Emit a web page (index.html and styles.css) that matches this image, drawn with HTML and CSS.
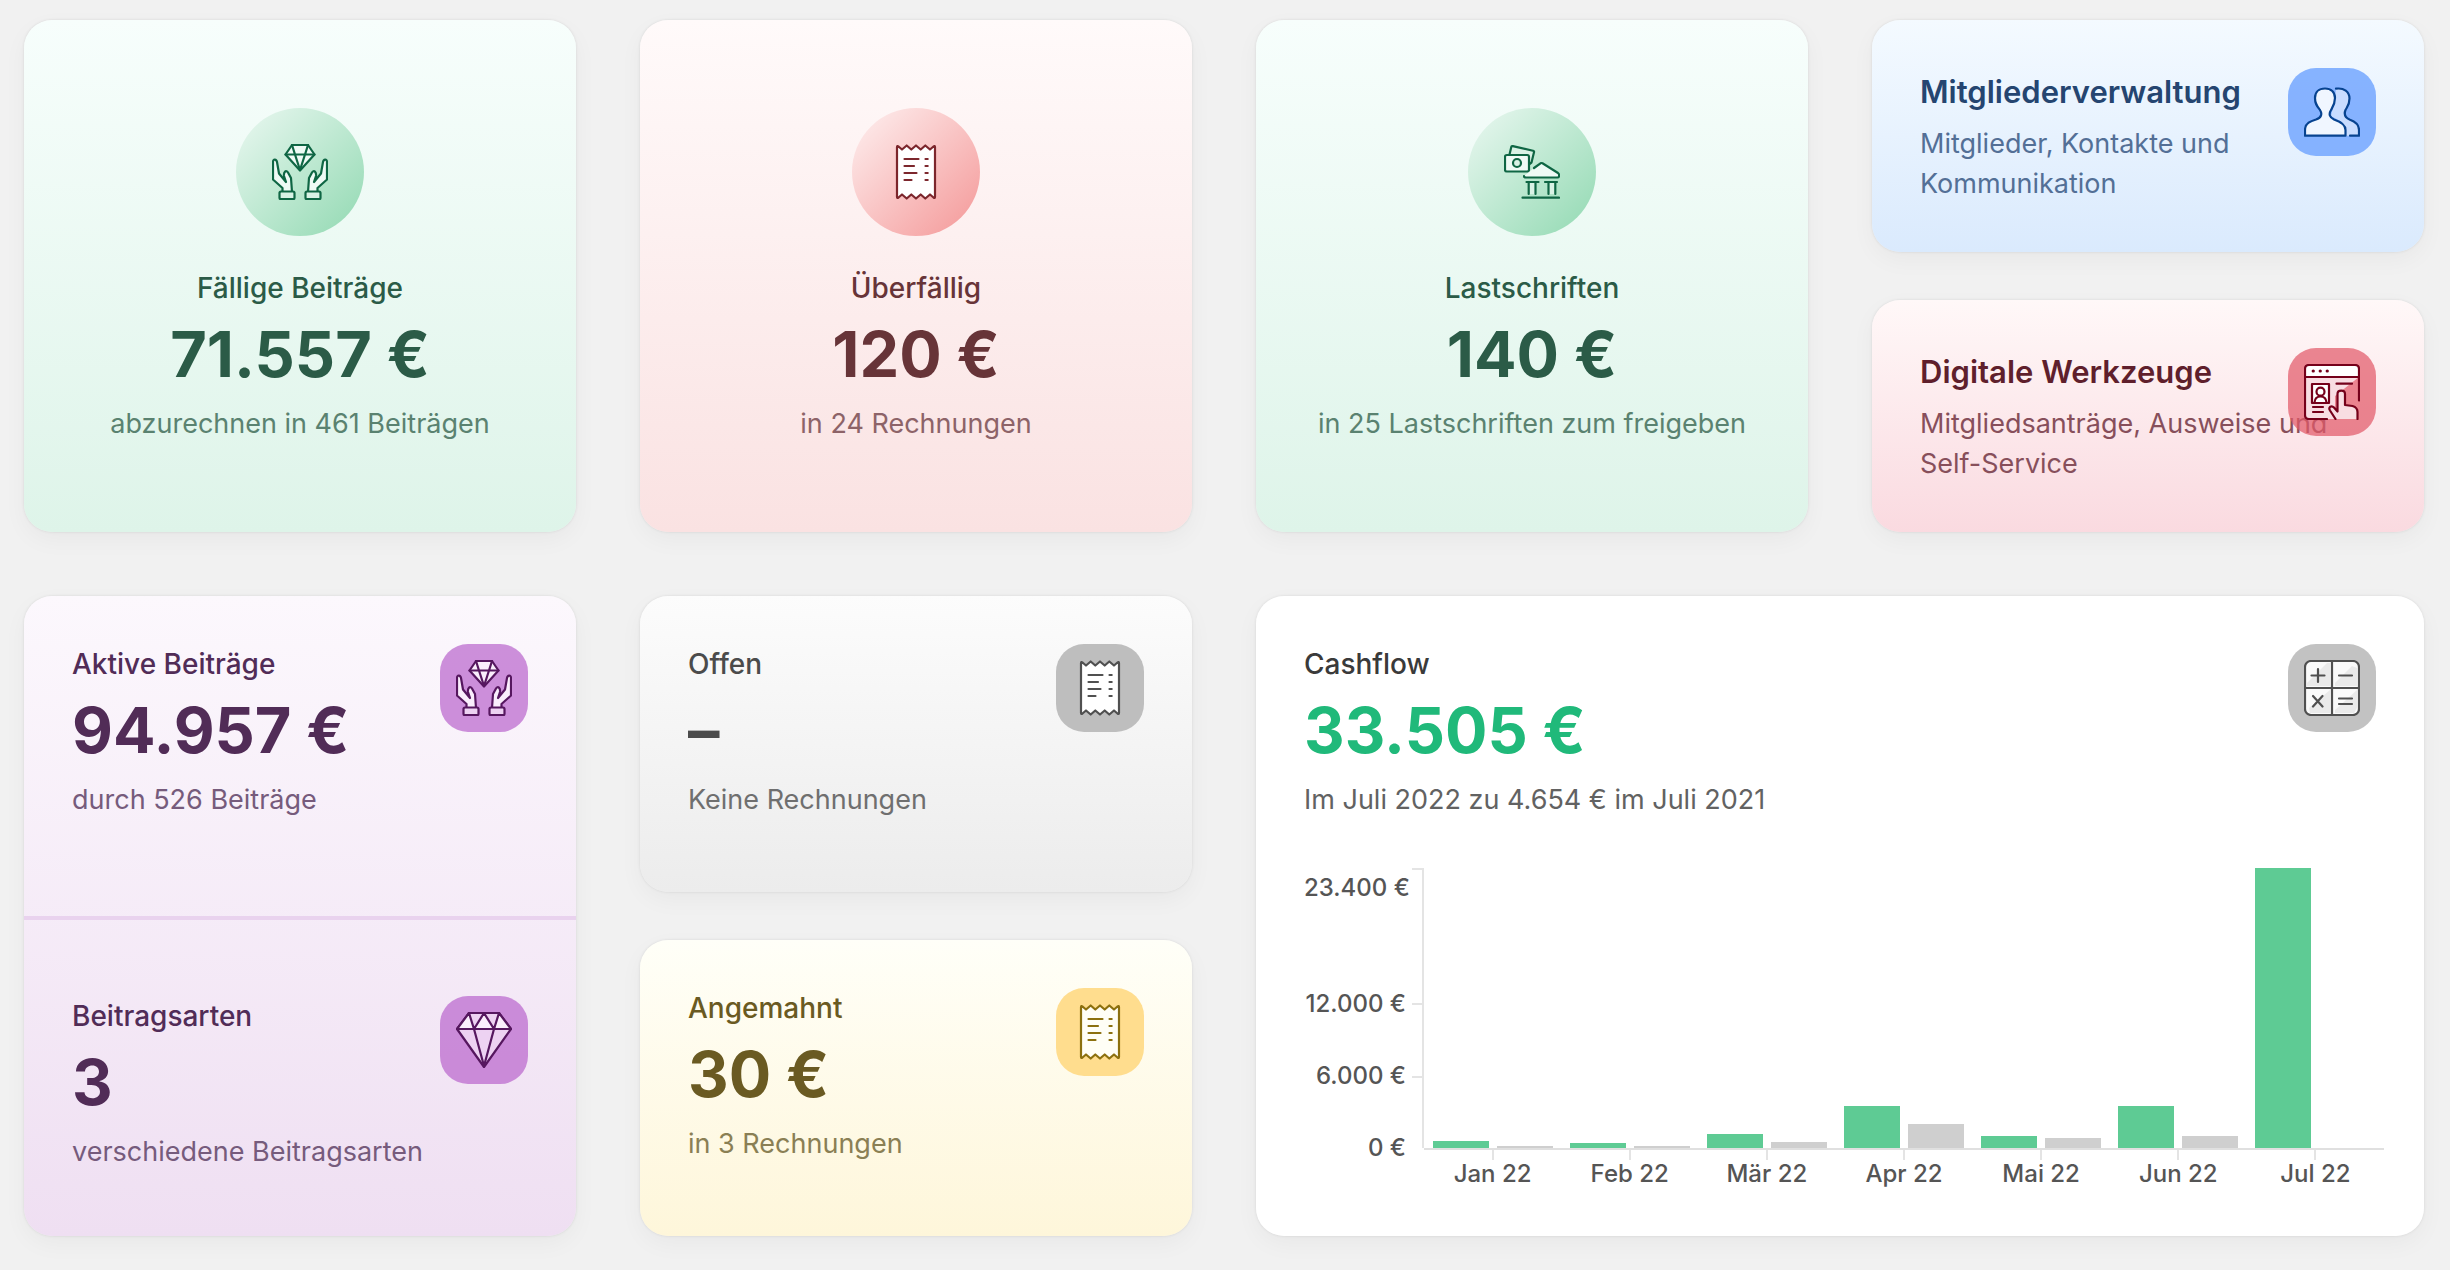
FILE: index.html
```html
<!DOCTYPE html>
<html lang="de">
<head>
<meta charset="utf-8">
<title>Finanzübersicht</title>
<link rel="stylesheet" href="styles.css">
</head>
<body>
<svg class="sprite" aria-hidden="true">
  <symbol id="i-hands" viewBox="0 0 56 56">
    <path class="f" d="M20 1H36L42.5 10.5L28 26.500L13.500 10.500Z"/>
    <path d="M13.500 10.500H42.500M20 1L23 10.500L28 26L33 10.500L36 1"/>
    <path class="f" d="M10.500 48V44L1 35.500V18C1 14.500 4.500 15 5 18L7 29.500L14 38L12 32C11.500 28 14 25.500 16 28.500L19 34L20 48Z"/>
    <path class="f" d="M45.500 48V44L55 35.500V18C55 14.500 51.500 15 51 18L49 29.500L42 38L44 32C44.500 28 42 25.500 40 28.500L37 34L36 48Z"/>
    <rect class="h" x="7.500" y="47.500" width="15" height="7.700" rx="1.500"/>
    <rect class="h" x="33.500" y="47.500" width="15" height="7.700" rx="1.500"/>
  </symbol>
  <symbol id="i-receipt" viewBox="0 0 56 56">
    <path class="f" d="M9 3Q9 1.500 10.500 2.500L14 5.500L18.700 1.500L23.300 5.500L28 1.500L32.700 5.500L37.300 1.500L42 5.500L45.500 2.500Q47 1.500 47 3V53Q47 54.500 45.500 53.500L42 50.500L37.300 54.500L32.700 50.500L28 54.500L23.300 50.500L18.700 54.500L14 50.500L10.500 53.500Q9 54.500 9 53Z"/>
    <path d="M16.500 15H30.500M16.500 22H26M16.500 29H28.500M16.500 36H23.500M37.500 15H39.700M37.500 22H39.700M37.500 29H39.700M37.500 36H39.700"/>
  </symbol>
  <symbol id="i-bank" viewBox="0 0 56 56">
    <path class="h" d="M5.500 10.500L7.300 3Q7.600 1.800 8.800 2.100L29 6.800Q30.300 7.100 30 8.300L27.500 18.500L25.500 20"/>
    <rect class="f" x="1" y="11" width="24" height="16.500" rx="1.800"/>
    <circle class="h" cx="13" cy="19" r="4"/>
    <path class="f" d="M30 24L36.500 19.300Q37.500 18.700 38.500 19.300L54 29Q55.200 30 55.200 31.500Q55 33.500 53.500 33.500H22Q20 33.500 20 32"/>
    <path class="h" d="M24.700 38V50H31.500V38M44.500 38V50H51.300V38" stroke="none"/>
    <path d="M22.500 38H34.500M41 38H53M24.700 38V50M31.500 38V50M44.500 38V50M51.300 38V50M18.500 53.700H55"/>
  </symbol>
  <symbol id="i-members" viewBox="0 0 56 56">
    <path class="h" stroke="none" d="M32 4.500C40 4 45.500 8 45.500 14.500C45.500 21 43 23 41.500 26C39 31 42 34 46 36C51 38 55 41 55 46V51.700H42L38 38L27 32L31 14Z"/>
    <path d="M32 4.700C40 3.500 45.500 8 45.500 14.500C45.500 21 43 23 41.500 26C39.500 31 42 34 46 35.700C51 37.500 55 41 55 46V51.700H46"/>
    <path class="f" d="M1 51.700V46C1 39 7 37 12 35.500C17.500 33.500 18.500 30 16 26C13 22 11 20 11 14C11 8 15 4.500 21 4.500S31 8 31 14C31 20 29.500 22 27 26C24.500 30 25.500 33.500 30 35.500C36 37.500 41.500 40 41.500 46V51.700Z"/>
  </symbol>
  <symbol id="i-tools" viewBox="0 0 56 56">
    <path class="h" stroke="none" d="M1 13H55L31 32V43L27 44L31 55H5Q1 55 1 51Z"/>
    <path class="f" stroke="none" d="M1 13V5Q1 1 5 1H51Q55 1 55 5V13Z"/>
    <path d="M23 55H5Q1 55 1 51V5Q1 1 5 1H51Q55 1 55 5V36.500M1 13H55M32.500 19.700H48M9 43H19M9 48H19"/>
    <path d="M9.200 7H9.300M16.200 7H16.300M23.200 7H23.300" stroke-width="3.200"/>
    <rect class="f" x="8" y="20" width="17" height="19"/>
    <circle cx="16.500" cy="27.700" r="4"/>
    <path d="M10.500 38.500Q11 32.500 16.500 32.500T22.500 38.500"/>
    <path class="h" d="M31.500 55L26 46.500C24 43 27.500 41 30 43.500L33.500 47.500V30C33.500 25.500 41 25.500 41 30V41L48.500 42Q53.500 43.500 53.500 48V55"/>
  </symbol>
  <symbol id="i-diamond" viewBox="0 0 56 56">
    <path class="h" d="M13 1H43L55 17L28 55L1 17Z"/>
    <path class="f" d="M13 1L18 17H1ZM28 1L38 17H18ZM43 1L55 17H38Z"/>
    <path d="M18 17L28 54L38 17"/>
  </symbol>
  <symbol id="i-calc" viewBox="0 0 56 56">
    <rect class="f" x="1" y="1" width="54" height="54" rx="6"/>
    <path class="shine" d="M3 23L23 3H26V26H3ZM31 23L48 6L53 8V26H31ZM5 48L26 30V53H6ZM31 50L53 30V48L50 53H31Z"/>
    <path d="M28 1V55M1 28H55M14 9V22M7.500 15.500H20.500M35 15.500H48M9 36L18.500 46.500M18.500 36L9 46.500M35 38.500H48M35 44H48"/>
  </symbol>
</svg>

<main class="dashboard">
  <section class="card hero green">
    <div class="disc"><svg class="icon" aria-hidden="true"><use href="#i-hands"/></svg></div>
    <h2 class="label">Fällige Beiträge</h2>
    <p class="value">71.557 €</p>
    <p class="note">abzurechnen in 461 Beiträgen</p>
  </section>
  <section class="card hero rose">
    <div class="disc"><svg class="icon" aria-hidden="true"><use href="#i-receipt"/></svg></div>
    <h2 class="label">Überfällig</h2>
    <p class="value">120 €</p>
    <p class="note">in 24 Rechnungen</p>
  </section>
  <section class="card hero green">
    <div class="disc"><svg class="icon" aria-hidden="true"><use href="#i-bank"/></svg></div>
    <h2 class="label">Lastschriften</h2>
    <p class="value">140 €</p>
    <p class="note">in 25 Lastschriften zum freigeben</p>
  </section>
  <div class="stack">
    <section class="card stat blue">
      <h2 class="heading">Mitgliederverwaltung</h2>
      <p class="note">Mitglieder, Kontakte und Kommunikation</p>
      <div class="tile"><svg class="icon" aria-hidden="true"><use href="#i-members"/></svg></div>
    </section>
    <section class="card stat red">
      <h2 class="heading">Digitale Werkzeuge</h2>
      <p class="note">Mitgliedsanträge, Ausweise und Self-Service</p>
      <div class="tile"><svg class="icon" aria-hidden="true"><use href="#i-tools"/></svg></div>
    </section>
  </div>

  <div class="card split purple">
    <section class="stat upper">
      <h2 class="label">Aktive Beiträge</h2>
      <p class="value">94.957 €</p>
      <p class="note">durch 526 Beiträge</p>
      <div class="tile"><svg class="icon" aria-hidden="true"><use href="#i-hands"/></svg></div>
    </section>
    <section class="stat lower">
      <h2 class="label">Beitragsarten</h2>
      <p class="value">3</p>
      <p class="note">verschiedene Beitragsarten</p>
      <div class="tile"><svg class="icon" aria-hidden="true"><use href="#i-diamond"/></svg></div>
    </section>
  </div>
  <div class="stack">
    <section class="card stat gray">
      <h2 class="label">Offen</h2>
      <p class="value">–</p>
      <p class="note">Keine Rechnungen</p>
      <div class="tile"><svg class="icon" aria-hidden="true"><use href="#i-receipt"/></svg></div>
    </section>
    <section class="card stat yellow">
      <h2 class="label">Angemahnt</h2>
      <p class="value">30 €</p>
      <p class="note">in 3 Rechnungen</p>
      <div class="tile"><svg class="icon" aria-hidden="true"><use href="#i-receipt"/></svg></div>
    </section>
  </div>
  <section class="card stat wide white">
    <h2 class="label">Cashflow</h2>
    <p class="value">33.505 €</p>
    <p class="note">Im Juli 2022 zu 4.654 € im Juli 2021</p>
    <div class="tile"><svg class="icon" aria-hidden="true"><use href="#i-calc"/></svg></div>
    <div class="chart">
      <div class="y-labels"><span class="top">23.400 €</span><span>12.000 €</span><span>6.000 €</span><span>0 €</span></div>
      <div class="y-axis"><i style="flex-grow:114"></i><i style="flex-grow:60"></i><i style="flex-grow:60"></i></div>
      <div class="plot">
        <div class="month"><div class="bars"><b style="height:7px"></b><s style="height:2px"></s></div><span>Jan 22</span></div>
        <div class="month"><div class="bars"><b style="height:5px"></b><s style="height:2px"></s></div><span>Feb 22</span></div>
        <div class="month"><div class="bars"><b style="height:14px"></b><s style="height:6px"></s></div><span>Mär 22</span></div>
        <div class="month"><div class="bars"><b style="height:42px"></b><s style="height:24px"></s></div><span>Apr 22</span></div>
        <div class="month"><div class="bars"><b style="height:12px"></b><s style="height:10px"></s></div><span>Mai 22</span></div>
        <div class="month"><div class="bars"><b style="height:42px"></b><s style="height:12px"></s></div><span>Jun 22</span></div>
        <div class="month"><div class="bars"><b style="height:280px"></b><s style="height:0"></s></div><span>Jul 22</span></div>
      </div>
    </div>
  </section>
</main>
</body>
</html>
```
FILE: styles.css
```css
* { box-sizing: border-box; margin: 0; }

body {
  background: #f1f1f1;
  font-family: Inter, "Liberation Sans", sans-serif;
  font-size: 28px;
  line-height: 40px;
}

.sprite { position: absolute; width: 0; height: 0; }

.dashboard {
  display: grid;
  grid-template-columns: repeat(4, minmax(0, 1fr));
  gap: 64px;
  padding: 20px 26px 34px 24px;
}

.stack { display: flex; flex-direction: column; gap: 48px; }
.stack > .card { flex: 1; }
.wide { grid-column: span 2; }

.card {
  border-radius: 28px;
  background: linear-gradient(var(--from), var(--to));
  color: var(--text);
  box-shadow: 0 0 3px rgba(0, 0, 0, .1), 0 8px 24px rgba(0, 0, 0, .04);
}

.green  { --from: #f7fefc; --to: #def4e9; --text: #2b5b47; --note: #5a8270; --icon: #0f6644; --f: #effaf5; --h: #d9f2e5; --disc-a: #e2f5eb; --disc-b: #9adcb8; }
.rose   { --from: #fffafa; --to: #fae2e2; --text: #673438; --note: #8d6368; --icon: #7c262c; --f: #fff; --h: #fff; --disc-a: #fde8e8; --disc-b: #f5a0a0; }
.blue   { --from: #f4faff; --to: #daeafd; --text: #254570; --note: #536f96; --icon: #074390; --f: #f0f6ff; --h: #c8dcff; --tile: rgba(111, 163, 255, .82); }
.red    { --from: #fff8f8; --to: #fadae0; --text: #5f1f2c; --note: #874f5b; --icon: #75001a; --f: #fff; --h: #f8dde2; --tile: rgba(226, 90, 106, .72); }
.purple { --from: #fcf8fd; --to: #efdff2; --text: #512c57; --note: #765b7c; --icon: #56175f; --f: #faeefc; --h: #edd2f2; --tile: rgba(187, 104, 205, .73); }
.gray   { --from: #fcfcfc; --to: #ececec; --text: #4b4b4b; --note: #6f6f6f; --icon: #505050; --f: #fff; --h: #fff; --tile: #bebebe; }
.yellow { --from: #fffff8; --to: #fef6da; --text: #6a5a22; --note: #8a7f54; --icon: #8c700f; --f: #fffef6; --h: #fffef6; --tile: #ffdd8e; }
.white  { --from: #fff; --to: #fff; --text: #3a3a3a; --note: #626262; --icon: #505050; --f: #fafafa; --h: #eee; --tile: #c2c2c2; }

.hero {
  display: flex;
  flex-direction: column;
  align-items: center;
  justify-content: center;
  text-align: center;
}

.disc {
  display: grid;
  place-items: center;
  width: 128px;
  height: 128px;
  margin-bottom: 32px;
  border-radius: 50%;
  background: linear-gradient(135deg, var(--disc-a) 10%, var(--disc-b) 90%);
}

.stat { position: relative; padding: 48px; }

.tile {
  position: absolute;
  top: 48px;
  right: 48px;
  display: grid;
  place-items: center;
  width: 88px;
  height: 88px;
  border-radius: 28px;
  background: var(--tile);
}

.icon {
  width: 56px;
  height: 56px;
  fill: none;
  stroke: var(--icon);
  stroke-width: 2.200;
  stroke-linecap: round;
  stroke-linejoin: round;
}

.f { fill: var(--f); }
.h { fill: var(--h); }
.shine { fill: #eaeaea; stroke: none; }

.label { font-size: 28px; line-height: 40px; font-weight: 500; }
.heading { margin-bottom: 8px; font-size: 31px; line-height: 48px; font-weight: 600; }
.value { margin: 8px 0 12px; font-size: 63px; line-height: 76px; font-weight: 700; }
.note { color: var(--note); font-size: 27px; }
.white .value { color: #20b97a; }

.split { display: flex; flex-direction: column; }
.upper { padding-bottom: 96px; border-bottom: 4px solid #e9d2ee; }
.lower { flex: 1; padding-top: 76px; }
.lower .tile { top: 76px; }

.chart {
  display: flex;
  margin: 48px -8px 0 0;
  color: #555;
  font-size: 24px;
  font-weight: 500;
}

.y-labels {
  display: flex;
  flex-direction: column;
  gap: 32px;
  width: 102px;
  height: 300px;
  text-align: right;
  white-space: nowrap;
}

.y-labels .top { margin-bottom: 44px; }

.y-axis {
  display: flex;
  flex-direction: column;
  width: 12px;
  height: 280px;
  margin-left: 6px;
  border-right: 2px solid #e4e4e4;
}

.y-axis i { border-top: 2px solid #e4e4e4; }

.plot { display: flex; flex: 1; }
.month { flex: 1; text-align: center; line-height: 28px; }

.bars {
  display: flex;
  align-items: flex-end;
  justify-content: center;
  gap: 8px;
  height: 282px;
  border-bottom: 2px solid #e0e0e0;
}

.bars b { width: 56px; background: #5ecb94; }
.bars s { width: 56px; background: #cfcfcf; }

.month span { display: block; }
.month span::before {
  content: "";
  display: block;
  width: 2px;
  height: 10px;
  margin: 0 auto;
  background: #e4e4e4;
}
```
